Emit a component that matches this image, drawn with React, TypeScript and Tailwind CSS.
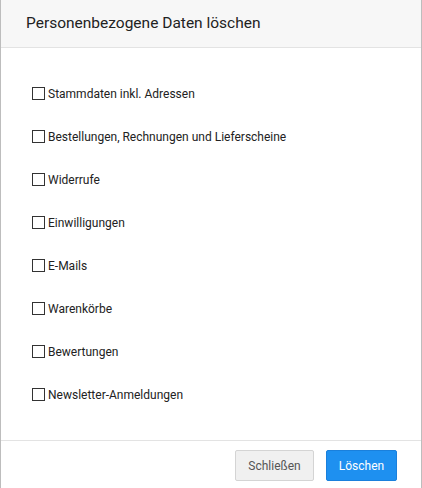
import React from 'react';

const items = [
    'Stammdaten inkl. Adressen',
    'Bestellungen, Rechnungen und Lieferscheine',
    'Widerrufe',
    'Einwilligungen',
    'E-Mails',
    'Warenkörbe',
    'Bewertungen',
    'Newsletter-Anmeldungen',
];

export default function App() {
    return (
        <div
            className="w-[422px] h-[488px] flex flex-col bg-white border-l border-r border-[#bdbdbd] text-[#333]"
            style={{ fontFamily: 'Roboto, "Liberation Sans", sans-serif' }}
        >
            {/* Header */}
            <div className="h-[48px] shrink-0 flex items-center pl-[25px] bg-[#f7f7f7] border-b border-[#e3e3e3]">
                <h2 className="text-[15.5px] text-[#222]">Personenbezogene Daten löschen</h2>
            </div>

            {/* Checkbox list */}
            <div className="flex-1 flex flex-col pt-[24px] pl-[31px]">
                {items.map((label) => (
                    <label key={label} className="h-[43px] flex items-center gap-[3px] text-[12px] text-[#222]">
                        <span className="w-[13px] h-[13px] border border-[#333] bg-white shrink-0" />
                        <span>{label}</span>
                    </label>
                ))}
            </div>

            {/* Footer */}
            <div className="h-[48px] shrink-0 flex justify-end items-start gap-[12px] pt-[9px] pr-[24px] border-t border-[#e3e3e3]">
                <button className="h-[31px] w-[79px] rounded-[2px] border border-[#d4d4d4] bg-[#f0f0f0] text-[12px] text-[#555]">
                    Schließen
                </button>
                <button className="h-[31px] w-[71px] rounded-[2px] border border-[#1a80dc] bg-[#1e90f0] text-[12px] text-white">
                    Löschen
                </button>
            </div>
        </div>
    );
}
